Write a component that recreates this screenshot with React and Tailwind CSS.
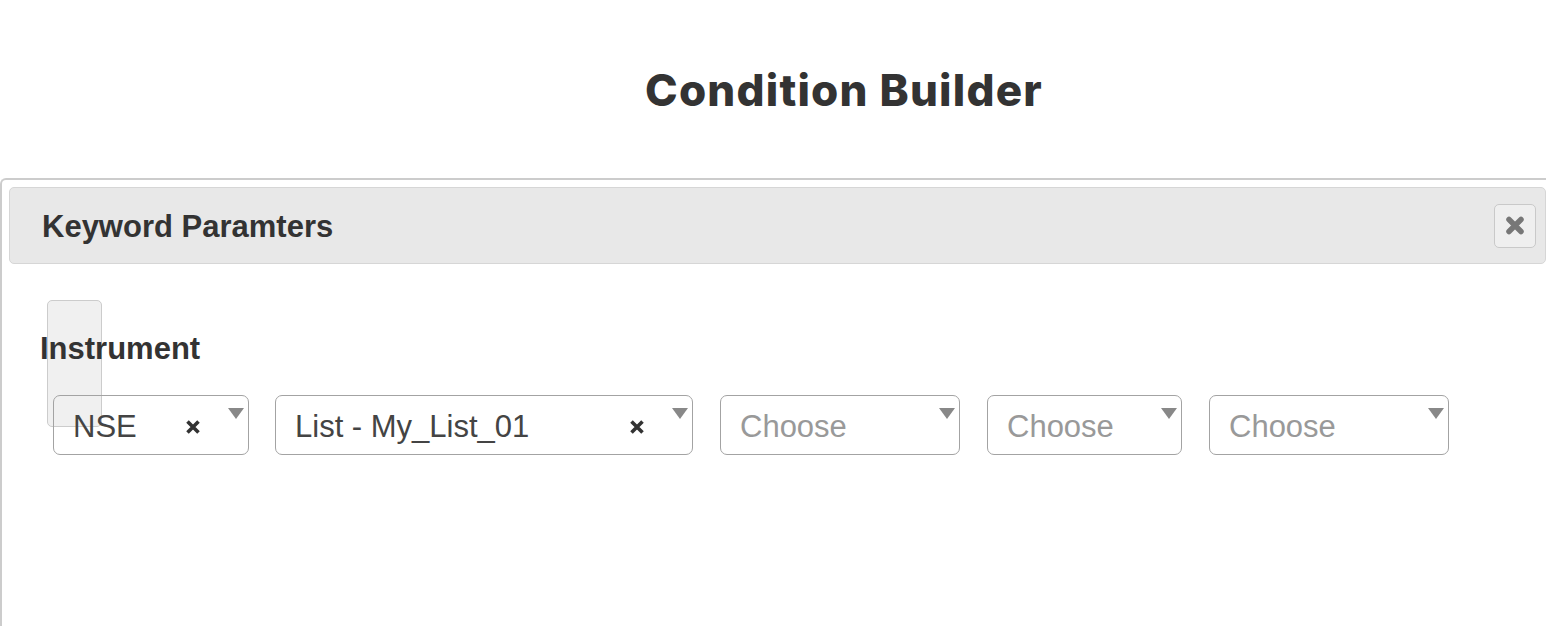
import React from "react";

const SELECTS = [
  { width: "w-[196px]", gap: "", value: "NSE", clearable: true },
  { width: "w-[418px]", gap: "ml-[26px]", value: "List - My_List_01", clearable: true },
  { width: "w-[240px]", gap: "ml-[27px]", value: null },
  { width: "w-[195px]", gap: "ml-[27px]", value: null },
  { width: "w-[240px]", gap: "ml-[27px]", value: null },
];

function SmallCross() {
  return (
    <svg width="16" height="16" viewBox="0 0 16 16" className="text-[#333]">
      <path d="M2.5 2.5 L13.5 13.5 M13.5 2.5 L2.5 13.5" stroke="currentColor" strokeWidth="3.6" />
    </svg>
  );
}

function Select({ width, gap, value, clearable }) {
  return (
    <div
      className={`relative z-10 flex h-[60px] ${width} ${gap} items-center rounded-[7px] border border-[#a3a3a3] bg-transparent pl-[19px] pt-[3px]`}
    >
      <span className={`text-[31px] leading-none ${value ? "text-[#444]" : "text-[#999]"}`}>
        {value || "Choose"}
      </span>
      {clearable && (
        <span className="absolute right-[47px] top-[23px]">
          <SmallCross />
        </span>
      )}
      <svg width="16" height="11" viewBox="0 0 16 11" className="absolute right-[4px] top-[12px]">
        <path d="M0 0 L16 0 L8 11 Z" fill="#888" />
      </svg>
    </div>
  );
}

export default function App() {
  return (
    <div className="h-[626px] w-[1546px] overflow-hidden bg-white font-['Liberation_Sans',Arial,sans-serif] text-[#333]">
      <div className="flex justify-center pl-[142px] pt-[62px]">
        <h1 className="font-['Inter',sans-serif] text-[44px] font-extrabold leading-[56px] tracking-[1.2px]">
          Condition Builder
        </h1>
      </div>

      <div className="relative mt-[60px] h-[500px] w-[1556px] rounded-tl-md border-l-2 border-t-2 border-[#ccc] pl-[7px] pt-[7px]">
        <div className="flex h-[77px] w-[1537px] items-center justify-between rounded-[5px] border border-[#d6d6d6] bg-[#e8e8e8] pl-[32px] pr-[9px]">
          <span className="pt-[3px] text-[31px] font-bold">Keyword Paramters</span>
          <button className="flex h-[44px] w-[42px] items-center justify-center rounded-[5px] border border-[#c9c9c9] bg-[#efefef]">
            <svg width="20" height="19" viewBox="0 0 20 19">
              <path d="M4 3.5 L16 15.5 M16 3.5 L4 15.5" stroke="#777" strokeWidth="5.5" strokeLinecap="round" />
            </svg>
          </button>
        </div>

        <div className="pointer-events-none absolute left-[45px] top-[120px] z-0 h-[127px] w-[55px] rounded-[5px] border border-[#ccc] bg-[#f0f0f0]" />

        <div className="relative z-10 mt-[68px] pl-[31px] text-[31px] font-bold leading-[34px]">
          Instrument
        </div>

        <div className="mt-[29px] flex pl-[44px]">
          {SELECTS.map((s, i) => (
            <Select key={i} {...s} />
          ))}
        </div>
      </div>
    </div>
  );
}
